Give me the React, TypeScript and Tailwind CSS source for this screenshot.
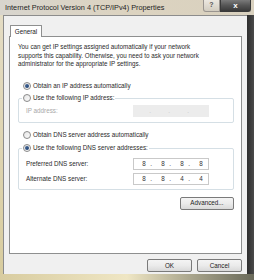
import React from "react";

const font = { fontFamily: '"Liberation Sans", Arial, sans-serif' };

function Radio({ checked }: { checked?: boolean }) {
  return (
    <div className="w-[8px] h-[8px] rounded-full border border-[#8a8a8a] bg-gradient-to-br from-[#e6e6e6] to-[#fafafa] flex items-center justify-center shrink-0">
      {checked && (
        <div className="w-[4px] h-[4px] rounded-full bg-gradient-to-br from-[#4a6c9a] to-[#1c3f72]" />
      )}
    </div>
  );
}

function Btn({ label, w }: { label: string; w: string }) {
  return (
    <div
      className={`${w} h-[13px] rounded-[2px] border border-[#7a7a7a] bg-gradient-to-b from-[#f4f4f4] via-[#ebebeb] to-[#d9d9d9] flex items-center justify-center text-[6.3px] text-[#222]`}
    >
      {label}
    </div>
  );
}

function IpBox({ values, disabled }: { values?: string[]; disabled?: boolean }) {
  const v = values ?? ["", "", "", ""];
  return (
    <div
      className={`w-[76px] h-[12px] flex items-center pl-[6px] ${
        disabled ? "bg-[#ececec] text-[#c8c8c8]" : "bg-white border border-[#c9c9c9] text-[#333]"
      } text-[6.3px]`}
    >
      {v.map((d, i) => (
        <React.Fragment key={i}>
          <div className="w-[8px] text-center">{d}</div>
          {i < 3 && <div className="w-[6px] text-center">.</div>}
          {i < 3 && <div className="w-[5px]" />}
        </React.Fragment>
      ))}
    </div>
  );
}

export default function App() {
  return (
    <div
      className="w-[254px] h-[280px] overflow-hidden flex flex-col bg-[#dcd3b8]"
      style={font}
    >
      {/* title bar */}
      <div className="h-[15px] flex items-start bg-gradient-to-r from-[#d8d5ce] via-[#dcd3c0] to-[#d9d1bf] shrink-0">
        <div className="pl-[5px] pt-[3px] text-[7.3px] leading-[9px] text-[#1e1e1e] whitespace-nowrap">
          Internet Protocol Version 4 (TCP/IPv4) Properties
        </div>
        <div className="ml-auto flex">
          <div className="w-[17px] h-[12px] border border-[#9a9590] border-t-0 rounded-bl-[3px] bg-gradient-to-b from-[#ece8e0] to-[#d2ccc0] flex items-center justify-center text-[7px] font-bold text-[#555]">
            ?
          </div>
          <div className="w-[31px] h-[12px] border border-[#3a3a3a] border-t-0 rounded-br-[3px] bg-gradient-to-b from-[#7a7a7a] via-[#555] to-[#3a3a3a] flex items-center justify-center text-[8px] font-bold text-white">
            x
          </div>
        </div>
        <div className="w-[3px]" />
      </div>
      <div className="flex flex-1 min-h-0">
        <div className="w-[3px] bg-gradient-to-b from-[#e4dcc4] to-[#d8cc9e]" />
        <div className="flex-1 bg-[#f0f0f0] border-l border-t border-[#8c8c8c] flex flex-col px-[5px] pt-[8px]">
          {/* tab */}
          <div className="flex">
            <div className="ml-[1px] w-[32px] h-[12px] bg-white border border-[#8e8f8f] border-b-0 rounded-t-[1px] text-[6.3px] text-[#222] flex items-center justify-center relative top-[1px]">
              General
            </div>
          </div>
          {/* panel */}
          <div className="h-[218px] bg-white border border-[#8e8f8f] flex flex-col text-[6.3px] text-[#2a2a2a]">
            <div className="mt-[6px] ml-[8px] leading-[8.5px]">
              You can get IP settings assigned automatically if your network
              <br />
              supports this capability. Otherwise, you need to ask your network
              <br />
              administrator for the appropriate IP settings.
            </div>
            <div className="mt-[13px] ml-[13px] flex items-center h-[9px] gap-[2px]">
              <Radio checked />
              <span>Obtain an IP address automatically</span>
            </div>
            {/* group 1 */}
            <div className="mt-[7px] ml-[8px] mr-[7px] h-[25px] border border-[#d5dfe5] rounded-[2px] relative flex items-center pl-[7px]">
              <div className="absolute -top-[5px] left-[3px] bg-white px-[1px] flex items-center gap-[2px] h-[9px]">
                <Radio />
                <span>Use the following IP address:</span>
              </div>
              <div className="mt-[2px] flex items-center w-full">
                <span className="text-[#a8a8a8] w-[107px]">IP address:</span>
                <IpBox disabled />
              </div>
            </div>
            <div className="mt-[8px] ml-[13px] flex items-center h-[9px] gap-[2px]">
              <Radio />
              <span>Obtain DNS server address automatically</span>
            </div>
            {/* group 2 */}
            <div className="mt-[8px] ml-[8px] mr-[7px] h-[42px] border border-[#d5dfe5] rounded-[2px] relative flex flex-col pl-[7px] pt-[9px] gap-[3px]">
              <div className="absolute -top-[5px] left-[3px] bg-white px-[1px] flex items-center gap-[2px] h-[9px]">
                <Radio checked />
                <span>Use the following DNS server addresses:</span>
              </div>
              <div className="flex items-center">
                <span className="w-[107px]">Preferred DNS server:</span>
                <IpBox values={["8", "8", "8", "8"]} />
              </div>
              <div className="flex items-center">
                <span className="w-[107px]">Alternate DNS server:</span>
                <IpBox values={["8", "8", "4", "4"]} />
              </div>
            </div>
            <div className="mt-[7px] mr-[7px] flex justify-end">
              <Btn label="Advanced..." w="w-[54px]" />
            </div>
          </div>
          <div className="mt-[5px] flex justify-end gap-[5px] pr-[0px]">
            <Btn label="OK" w="w-[45px]" />
            <Btn label="Cancel" w="w-[45px]" />
          </div>
        </div>
        <div className="w-[7px] bg-gradient-to-r from-[#2e2e2e] to-[#4a4a4a]" />
      </div>
      <div className="h-[6px] bg-gradient-to-r from-[#d8cca0] via-[#efe6c4] to-[#6a6a5a] shrink-0" />
    </div>
  );
}
